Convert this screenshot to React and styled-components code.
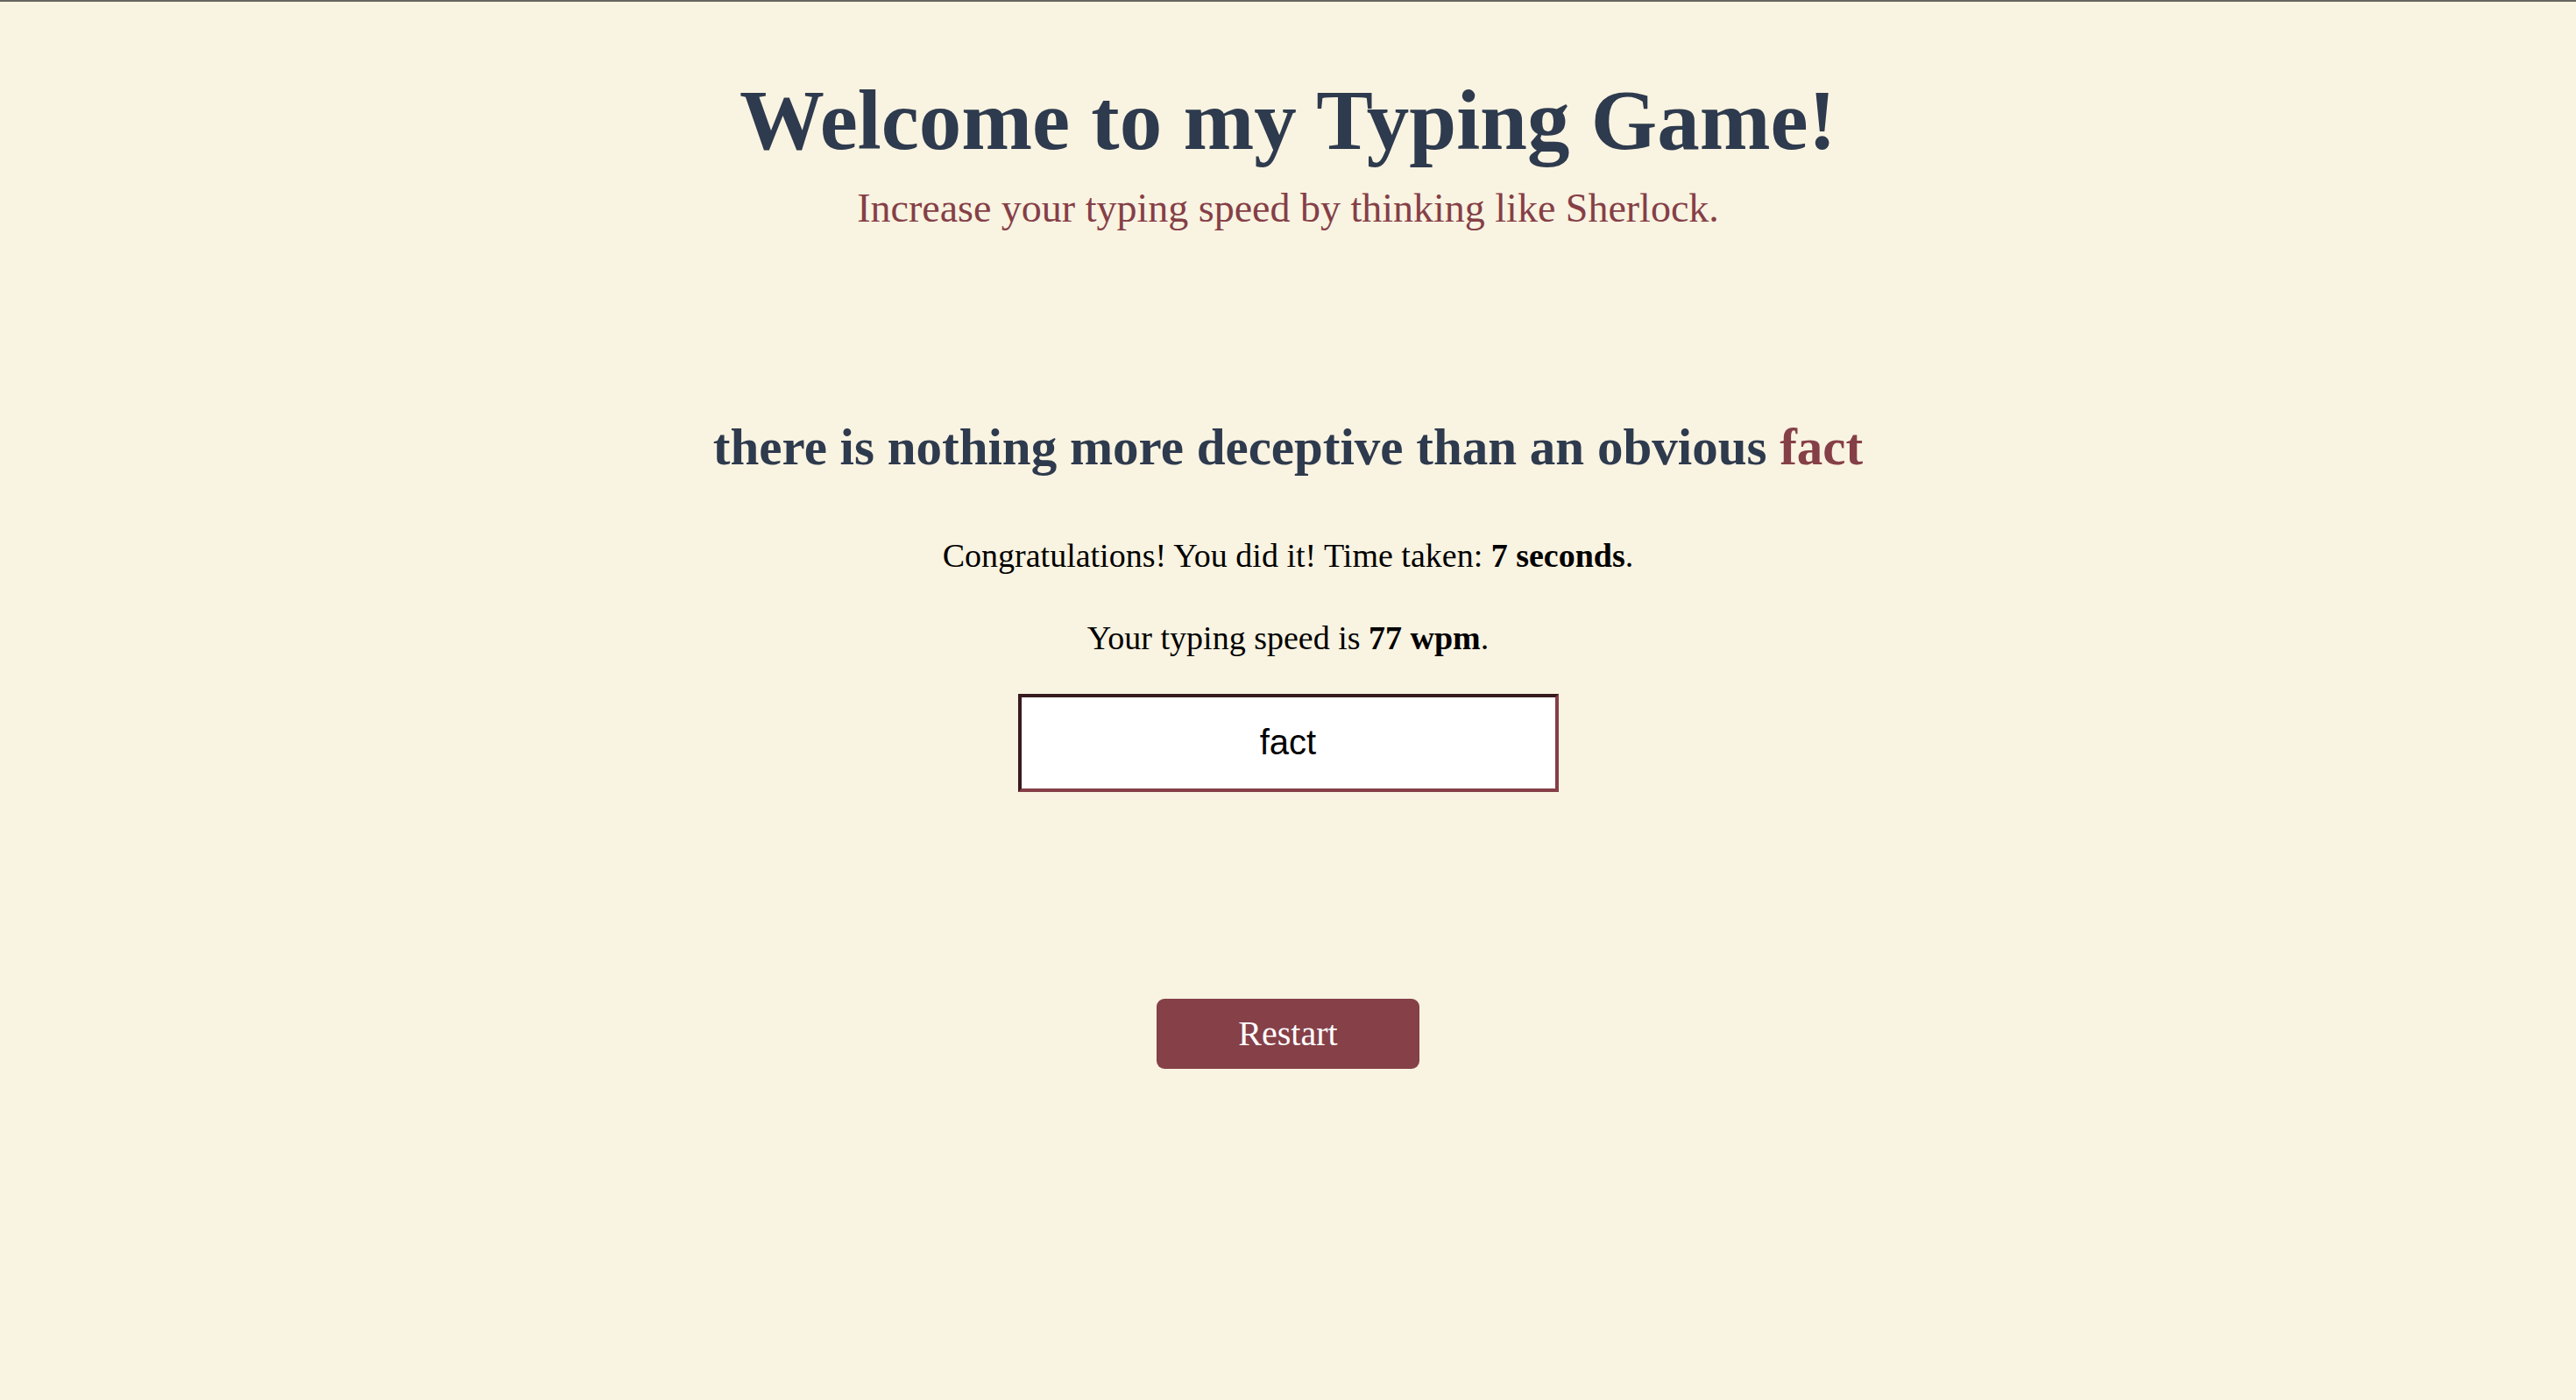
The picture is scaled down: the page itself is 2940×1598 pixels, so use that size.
import styled, { createGlobalStyle } from "styled-components";

const GlobalStyle = createGlobalStyle`
  * {
    box-sizing: border-box;
  }
  body {
    margin: 0;
    background-color: #f9f3e1;
    font-family: "Liberation Serif", "DejaVu Serif", serif;
  }
`;

const Page = styled.main`
  min-height: 100vh;
  border-top: 2px solid #67655f;
  display: flex;
  flex-direction: column;
  align-items: center;
  text-align: center;
  color: #000;
`;

const Header = styled.header`
  display: flex;
  flex-direction: column;
  align-items: center;
  padding-top: 78px;
`;

const Title = styled.h1`
  margin: 0;
  font-size: 97px;
  line-height: 1.2;
  font-weight: 700;
  color: #2e3a4d;
`;

const Subtitle = styled.p`
  margin: 14px 0 0;
  font-size: 46px;
  line-height: 1.2;
  color: #853f47;
`;

const Game = styled.section`
  display: flex;
  flex-direction: column;
  align-items: center;
  margin-top: 209px;
`;

const Quote = styled.h2`
  margin: 0;
  font-size: 59px;
  line-height: 1.2;
  font-weight: 700;
  color: #2e3a4d;
`;

const Word = styled.span`
  color: ${(p) => (p.$current ? "#853f47" : "inherit")};
`;

const Message = styled.p`
  margin: ${(p) => p.$gap || "0"} 0 0;
  font-size: 38px;
  line-height: 1.2;
`;

const TypeInput = styled.input`
  margin-top: 40px;
  width: 617px;
  height: 112px;
  border: 4px solid #853f47;
  border-top-color: #381b1e;
  border-left-color: #381b1e;
  background: #fff;
  font-family: "Liberation Sans", Arial, sans-serif;
  font-size: 40px;
  text-align: center;
  color: #000;
  outline: none;
`;

const RestartButton = styled.button`
  margin-top: 236px;
  width: 300px;
  height: 80px;
  border: none;
  border-radius: 9px;
  background-color: #854048;
  color: #fff;
  font-family: "Liberation Serif", "DejaVu Serif", serif;
  font-size: 40px;
  cursor: pointer;
`;

const quote = "there is nothing more deceptive than an obvious fact";

export default function App() {
  const words = quote.split(" ");
  return (
    <>
      <GlobalStyle />
      <Page>
        <Header>
          <Title>Welcome to my Typing Game!</Title>
          <Subtitle>Increase your typing speed by thinking like Sherlock.</Subtitle>
        </Header>
        <Game>
          <Quote>
            {words.map((w, i) => (
              <Word key={i} $current={i === words.length - 1}>
                {w}
                {i < words.length - 1 ? " " : ""}
              </Word>
            ))}
          </Quote>
          <Message $gap="67px">
            Congratulations! You did it! Time taken: <b>7 seconds</b>.
          </Message>
          <Message $gap="48px">
            Your typing speed is <b>77 wpm</b>.
          </Message>
          <TypeInput defaultValue="fact" />
          <RestartButton>Restart</RestartButton>
        </Game>
      </Page>
    </>
  );
}
